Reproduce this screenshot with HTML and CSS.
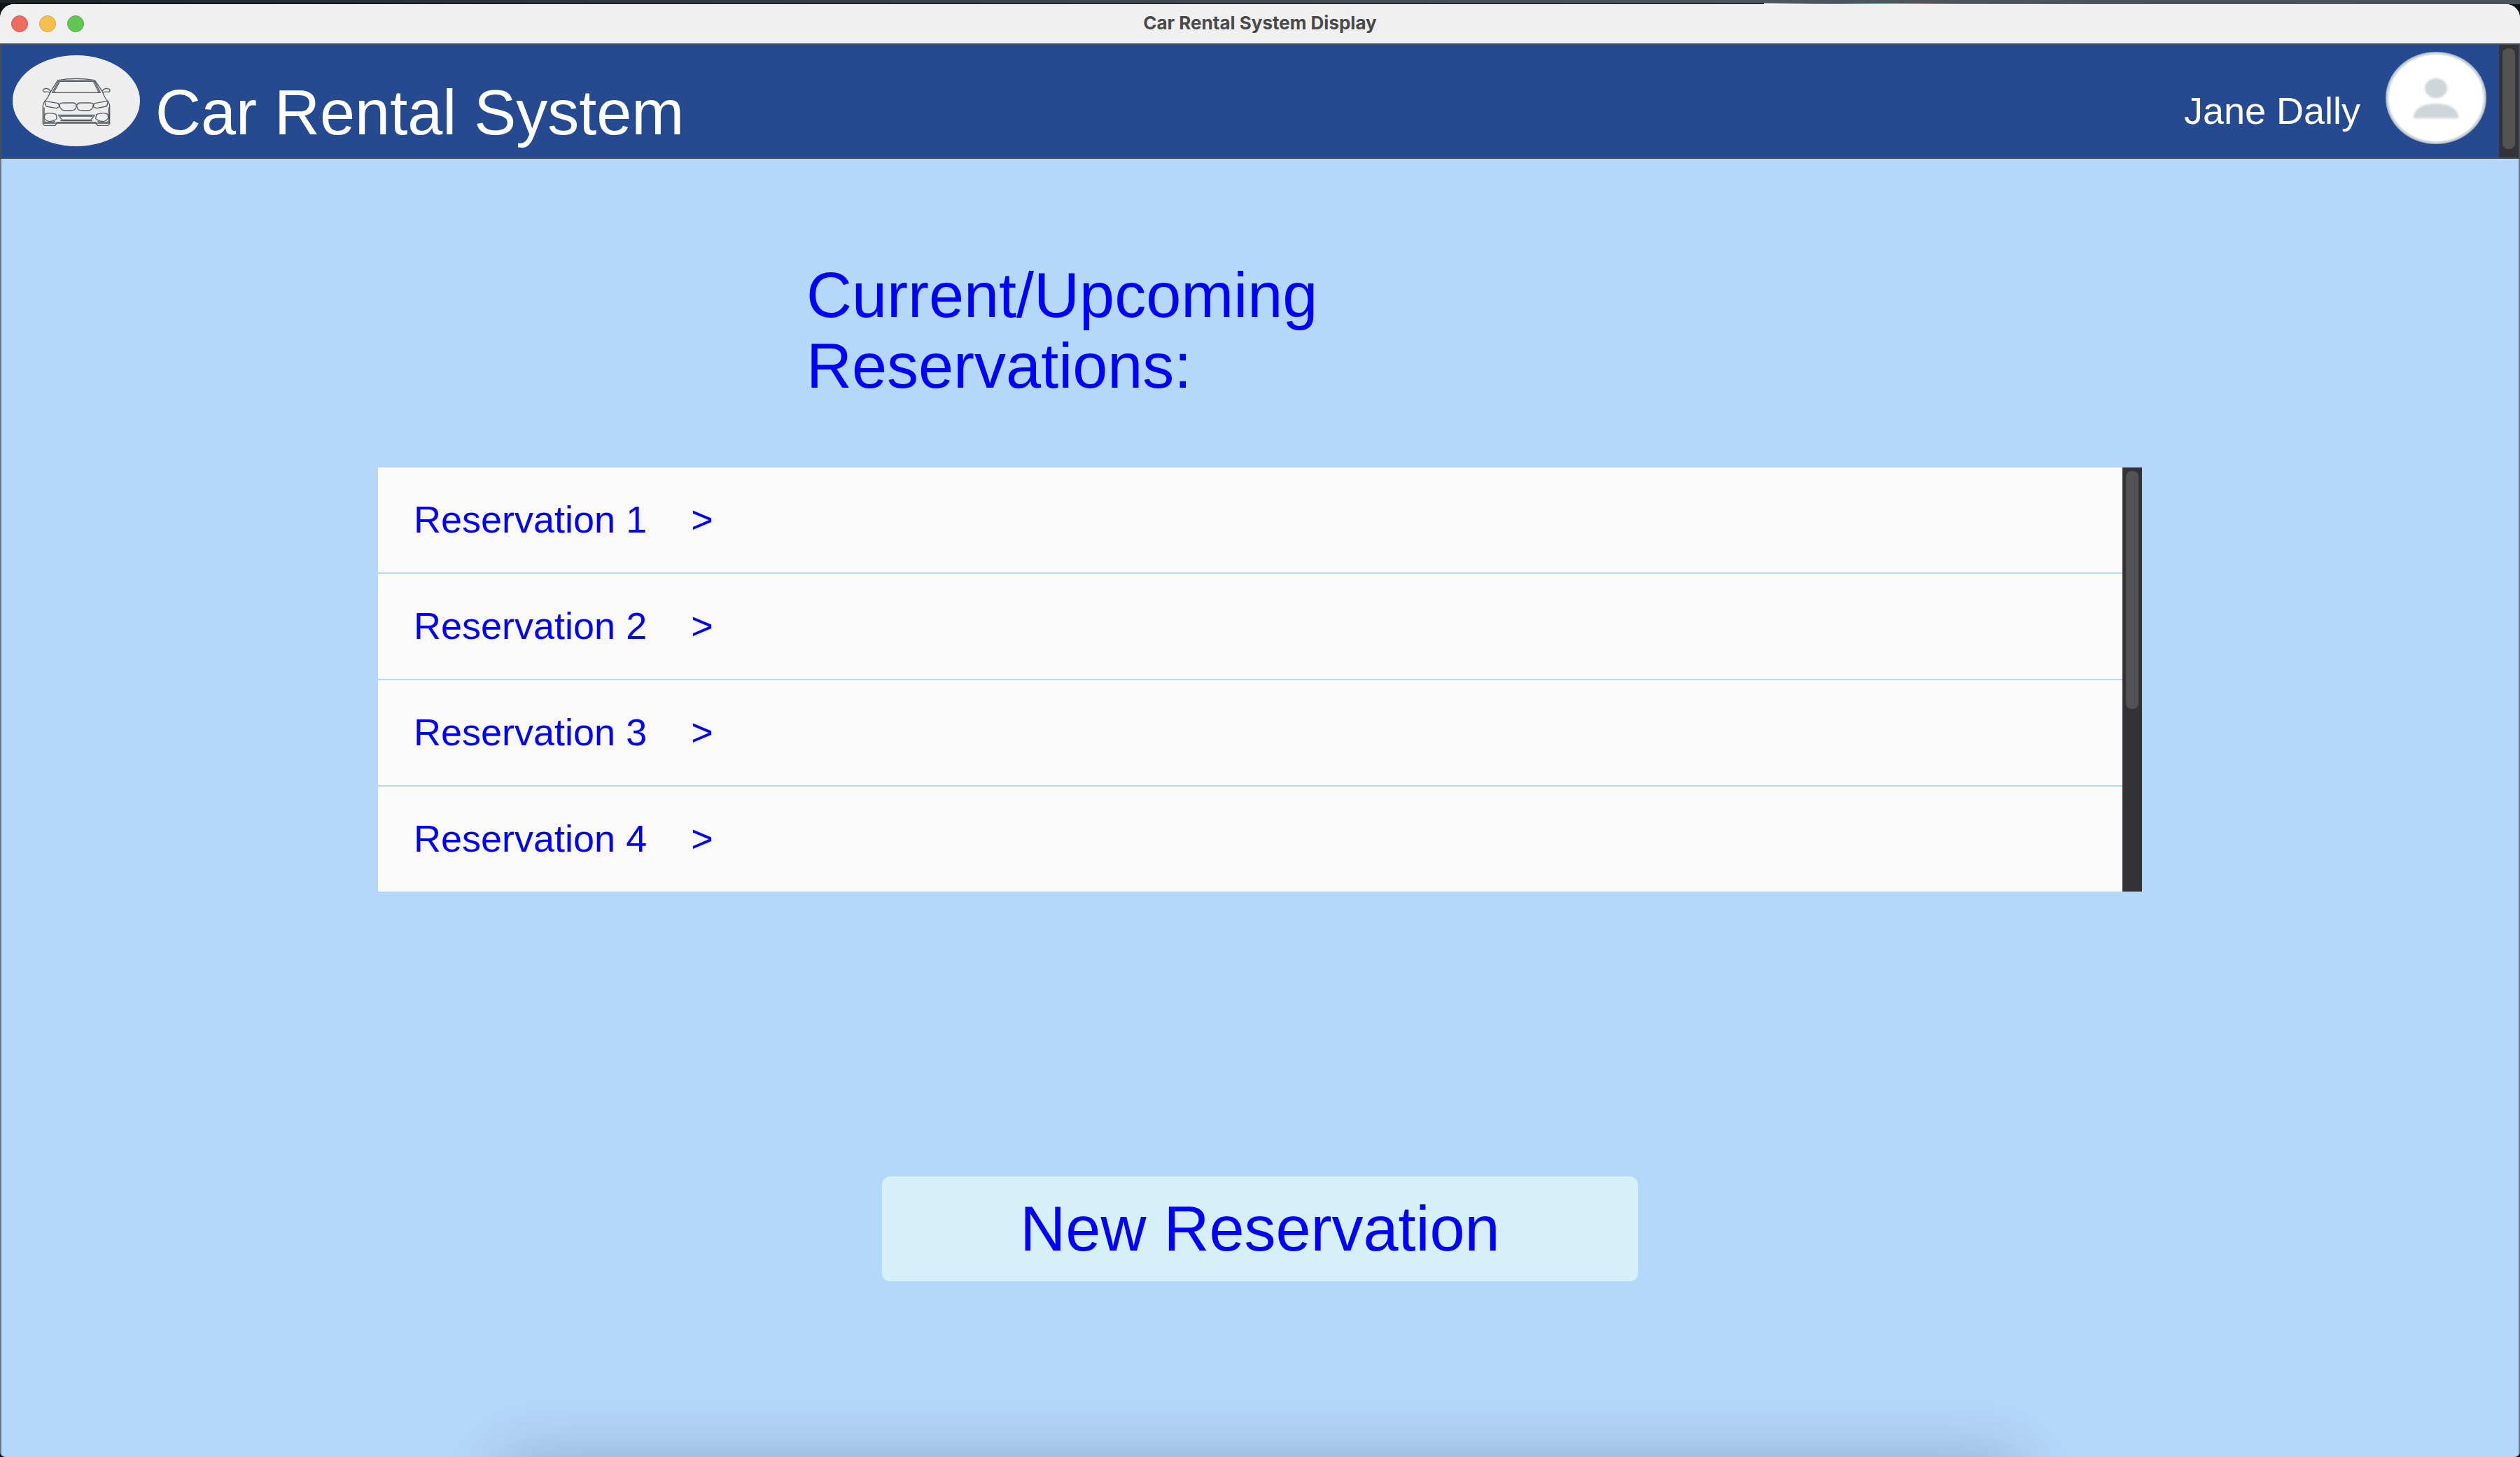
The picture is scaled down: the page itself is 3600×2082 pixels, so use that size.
FILE: index.html
```html
<!DOCTYPE html>
<html lang="en">
<head>
<meta charset="utf-8">
<title>Car Rental System Display</title>
<link rel="stylesheet" href="styles.css">
</head>
<body>
<div class="desktop-edge"></div>
<div class="window">
  <div class="titlebar">
    <div class="window-controls">
      <button class="control close" type="button" aria-label="Close"></button>
      <button class="control minimise" type="button" aria-label="Minimise"></button>
      <button class="control maximise" type="button" aria-label="Maximise"></button>
    </div>
    <div class="window-title">Car Rental System Display</div>
  </div>

  <header class="header">
    <div class="header-content">
      <svg class="logo" viewBox="52 237 546 390" aria-hidden="true">
        <ellipse cx="325" cy="432" rx="273" ry="195" fill="#eeeeee"/>
        <g fill="none" stroke="#555c62" stroke-width="4" stroke-linejoin="round" stroke-linecap="round">
          <path d="M246 344Q325 330 404 344M246 344L214 394Q204 420 190 434M404 344L438 394Q446 420 460 434"/>
          <path d="M248 349H404L428 397H222ZM252 353L230 393M400 353L420 393M246 344L404 344"/>
          <path d="M214 394Q210 379 194 379Q182 381 182 389Q184 396 194 394Q204 392 211 398"/>
          <path d="M436 394Q440 379 456 379Q470 381 469 389Q468 396 458 394Q447 392 439 398"/>
          <path d="M191 433L248 443L253 457L240 464L196 456Q190 446 191 433Z"/>
          <path d="M460 433L403 443L396 457L412 464L454 456Q461 446 460 433Z"/>
          <path d="M254 446Q258 441 272 441H312Q325 443 325 454Q324 474 304 474H274Q260 472 254 457Z"/>
          <path d="M398 446Q394 441 380 441H340Q327 443 327 454Q328 474 348 474H378Q392 472 398 457Z"/>
          <path d="M190 434Q180 448 182 464V528Q183 538 192 538H234L242 528H408L416 538H458Q468 537 468 528V464Q470 446 460 434"/>
          <path d="M187 462V522Q214 530 232 521M464 462V522Q438 530 418 521"/>
          <path d="M190 490Q206 480 238 490L242 508Q234 518 210 521Q190 516 188 504Z"/>
          <path d="M460 490Q444 480 412 490L408 508Q416 518 440 521Q460 516 462 504Z"/>
          <path d="M248 493H404L388 514H264ZM258 498H394M242 524H408M258 518H392M184 528H240M410 528H467"/>
        </g>
      </svg>
      <h1 class="brand">Car Rental System</h1>
      <span class="user-name">Jane Dally</span>
      <svg class="avatar" viewBox="0 0 145 133" role="img" aria-label="Profile picture">
        <defs>
          <radialGradient id="rim">
            <stop offset="0.92" stop-color="#ffffff"/>
            <stop offset="1" stop-color="#9fb2bb"/>
          </radialGradient>
          <filter id="soft"><feGaussianBlur stdDeviation="1.5"/></filter>
        </defs>
        <ellipse cx="72" cy="66" rx="72" ry="66" fill="url(#rim)"/>
        <g fill="#ced6d9" filter="url(#soft)">
          <ellipse cx="72" cy="52" rx="16" ry="14"/>
          <path d="M40 95V90C44 79 57 74 72 74S100 79 104 90V95Z"/>
        </g>
      </svg>
    </div>
    <div class="scroll-track"><div class="scroll-thumb header-thumb"></div></div>
  </header>

  <main class="main">
    <h2 class="heading">Current/Upcoming<br>Reservations:</h2>
    <div class="list-panel">
      <ul class="list">
        <li><a class="row" href="#r1"><span>Reservation 1</span><span>&gt;</span></a></li>
        <li><a class="row" href="#r2"><span>Reservation 2</span><span>&gt;</span></a></li>
        <li><a class="row" href="#r3"><span>Reservation 3</span><span>&gt;</span></a></li>
        <li><a class="row" href="#r4"><span>Reservation 4</span><span>&gt;</span></a></li>
      </ul>
      <div class="scroll-track"><div class="scroll-thumb list-thumb"></div></div>
    </div>
    <button class="new-button" type="button">New Reservation</button>
  </main>
</div>
</body>
</html>
```
FILE: styles.css
```css
* {
  box-sizing: border-box;
}

body {
  display: flex;
  flex-direction: column;
  min-height: 100vh;
  margin: 0;
  background: #111416;
  font-family: "Liberation Sans", Arial, sans-serif;
}

.desktop-edge {
  height: 6px;
  background:
    linear-gradient(90deg, transparent 70%, #c4c9cc 70%, #6d757a 72%, #5c63b0 73%, #5a8fd0 74%, #6fb080 75%, #a87a70 76%, #6a6460 78%, #4d555c 83%) 0 4px / 100% 2px no-repeat,
    linear-gradient(#000000, #000000) 0 5px / 70% 1px no-repeat,
    linear-gradient(90deg, #1e2326, #41484c 45%, #4d555c 70%, #4a5259);
}

.window {
  position: relative;
  display: flex;
  flex-direction: column;
  flex: 1;
  overflow: hidden;
  border-radius: 20px 20px 8px 8px;
  background: #b5d7fa;
}

.titlebar {
  display: grid;
  grid-template-columns: 1fr auto 1fr;
  align-items: center;
  height: 56px;
  padding: 0 16px;
  background: #f0f0f0;
  box-shadow: inset 0 1px #ffffff;
}

.window-controls {
  display: flex;
  gap: 16px;
}

.control {
  width: 24px;
  height: 24px;
  padding: 0;
  border: 1px solid;
  border-radius: 50%;
}

.close {
  background: #ed6b5f;
  border-color: #d9574c;
}

.minimise {
  background: #f5c04f;
  border-color: #dca63a;
}

.maximise {
  background: #62c655;
  border-color: #50af41;
}

.window-title {
  padding-bottom: 2px;
  color: #4a4a4a;
  font: 700 26px/32px Inter, sans-serif;
}

.header {
  display: flex;
  border: 2px solid #454f5c;
  background: #254a91;
}

.header-content {
  display: flex;
  flex: 1;
  align-items: flex-start;
  height: 161px;
  padding: 0 17px 0 16px;
}

.logo {
  width: 182px;
  height: 130px;
  margin-top: 15px;
}

.brand {
  flex: 1;
  margin: 47px 0 0 22px;
  color: #ffffff;
  font-size: 90px;
  font-weight: 400;
  line-height: 100px;
}

.user-name {
  margin: 64px 36px 0 0;
  color: #ffffff;
  font-size: 54px;
  line-height: 60px;
}

.avatar {
  width: 145px;
  height: 133px;
  margin-top: 10px;
}

.scroll-track {
  width: 28px;
  padding: 5px;
  background: #333237;
}

.scroll-thumb {
  border-radius: 8px;
  background: #525254;
}

.header-thumb {
  height: 144px;
}

.list-thumb {
  height: 340px;
}

.main {
  display: flex;
  flex-direction: column;
  flex: 1;
  align-items: center;
  padding: 145px 0 80px;
  box-shadow: inset 2px 0 #68788a, inset -2px 0 #68788a;
}

.heading {
  width: 36%;
  margin: 0 0 94px;
  color: #0000ff;
  font-size: 90px;
  font-weight: 400;
  line-height: 101px;
}

.list-panel {
  display: flex;
  width: 70%;
  margin-bottom: 407px;
}

.list {
  display: flex;
  flex: 1;
  flex-direction: column;
  gap: 2px;
  margin: 0;
  padding: 0;
  list-style: none;
}

.row {
  display: flex;
  align-items: center;
  gap: 63px;
  height: 150px;
  padding: 0 51px 2px;
  background: #fafafa;
  color: #0000ff;
  font-size: 54px;
  text-decoration: none;
}

.new-button {
  width: 30%;
  height: 150px;
  border: 0;
  border-radius: 12px;
  background: #d6f0fa;
  color: #0000ff;
  font-family: inherit;
  font-size: 90px;
}

.window::after {
  content: "";
  position: absolute;
  top: 100%;
  right: 20%;
  left: 20%;
  height: 120px;
  box-shadow: 0 0 90px rgba(50, 60, 80, 0.27);
}
```
